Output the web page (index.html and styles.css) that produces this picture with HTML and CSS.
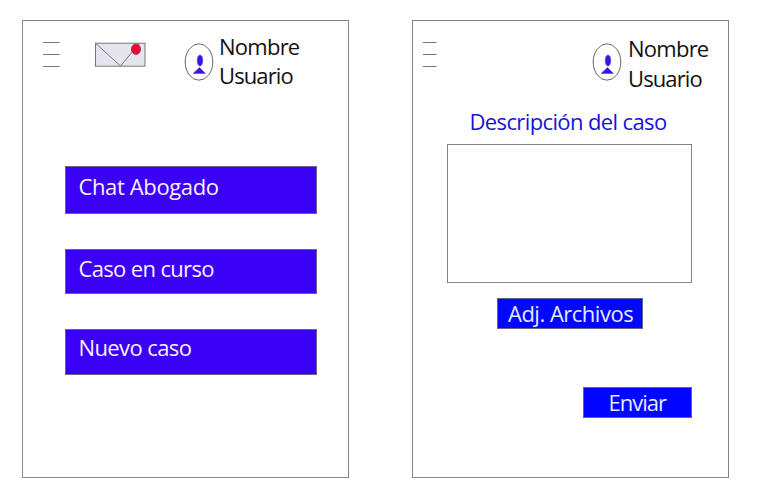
FILE: index.html
```html
<!DOCTYPE html>
<html lang="es">
<head>
<meta charset="utf-8">
<title>Casos</title>
<link rel="stylesheet" href="styles.css">
</head>
<body>
<main class="screens">
  <section class="screen home">
    <header class="bar">
      <svg class="menu" width="18" height="28" viewBox="0 0 18 28"><path d="M1 1.5H17.5M1 13.5H17.5M1 25.5H17.5"/></svg>
      <svg class="mail" width="51" height="25" viewBox="0 0 51 25"><rect x=".5" y="1.2" width="49.5" height="23"/><path d="M.5 1.2L25.5 24L44.5 1.2"/><ellipse cx="41" cy="7.2" rx="4.6" ry="5.2"/></svg>
      <svg class="avatar" width="30" height="38" viewBox="0 0 30 38"><ellipse class="ring" cx="15" cy="19" rx="13.8" ry="18.2"/><path d="M9 30.5L15.5 24.5L21.5 30.5Z"/><ellipse cx="16" cy="17.5" rx="2.8" ry="5.5"/></svg>
      <div class="user"><span class="t-nombre">Nombre</span><br><span class="t-usuario">Usuario</span></div>
    </header>
    <nav class="options">
      <button class="option chat"><span>Chat Abogado</span></button>
      <button class="option current"><span>Caso en curso</span></button>
      <button class="option new"><span>Nuevo caso</span></button>
    </nav>
  </section>
  <section class="screen case">
    <header class="bar">
      <svg class="menu" width="14" height="28" viewBox="0 0 14 28"><path d="M0 1.5H13.5M0 13.5H13.5M0 25.5H13.5"/></svg>
      <svg class="avatar" width="30" height="38" viewBox="0 0 30 38"><ellipse class="ring" cx="15" cy="19" rx="13.8" ry="18.2"/><path d="M9 30.5L15.5 24.5L21.5 30.5Z"/><ellipse cx="16" cy="17.5" rx="2.8" ry="5.5"/></svg>
      <div class="user"><span class="t-nombre">Nombre</span><br><span class="t-usuario">Usuario</span></div>
    </header>
    <h1 class="title"><span>Descripción del caso</span></h1>
    <div class="description"></div>
    <button class="action attach"><span>Adj. Archivos</span></button>
    <button class="action send"><span>Enviar</span></button>
  </section>
</main>
</body>
</html>
```
FILE: styles.css
```css
* { box-sizing: border-box; }
body {
  margin: 0;
  background: #fff;
  color: #111;
  font: 22px/30px "Open Sans", "Noto Sans", sans-serif;
}
.screens { display: flex; gap: 63px; padding: 20px 0 0 22px; }
.screen { height: 458px; border: 1px solid #858585; background: #fff; }
.home { width: 327px; }
.case { width: 317px; display: flex; flex-direction: column; }
.bar { display: flex; align-items: flex-start; height: 67px; white-space: nowrap; }
.bar svg { flex: none; display: block; fill: none; stroke: #777; stroke-width: 1; }
.menu { margin: 20px 0 0 19px; }
.mail { margin: 21px 0 0 35px; }
.mail rect { fill: #e6e5ef; }
.mail ellipse { fill: #f4002f; stroke: #9b4658; }
.bar .avatar { margin: 22px 0 0 38px; fill: #3d12e6; }
.avatar path, .avatar ellipse { stroke: #6250a0; stroke-width: .6; }
.avatar .ring { fill: #fff; stroke: #666; stroke-width: 1; }
.user { margin: 11px 0 0 5px; line-height: 29px; }
.t-nombre { letter-spacing: -.75px; }
.t-usuario { letter-spacing: -.9px; }
.case .menu { margin-left: 10px; }
.bar .menu + .avatar { margin-left: 155px; }
.case .user { margin-top: 12px; margin-left: 6px; line-height: 30px; }
button { display: block; font: inherit; text-align: left; white-space: nowrap; padding: 0; border: 1px solid #68648c; }
.options { display: grid; width: 252px; margin: 78px 0 0 42px; }
.option { padding-left: 12.5px; background: #3b00f6; color: #fbeeff; display: flex; align-items: flex-start; }
.chat { height: 48px; padding-top: 4px; letter-spacing: -.37px; }
.current { height: 45px; margin-top: 35px; padding-top: 3px; letter-spacing: -.65px; }
.new { height: 46px; margin-top: 35px; padding-top: 2px; letter-spacing: -.6px; }
.title { font: inherit; color: #1712d8; margin: 18px 0 0 56.5px; white-space: nowrap; letter-spacing: -.62px; }
.description { width: 245px; height: 139px; margin: 8px 0 0 34px; border: 1px solid #858585; }
.action { height: 31px; background: #0006ff; color: #e4eaff; line-height: 29px; }
.attach { width: 146px; margin: 15px 0 0 84px; padding-left: 10px; letter-spacing: -.5px; }
.send { width: 109px; margin: 58px 0 0 170px; padding-left: 24.5px; letter-spacing: -1px; }
```
